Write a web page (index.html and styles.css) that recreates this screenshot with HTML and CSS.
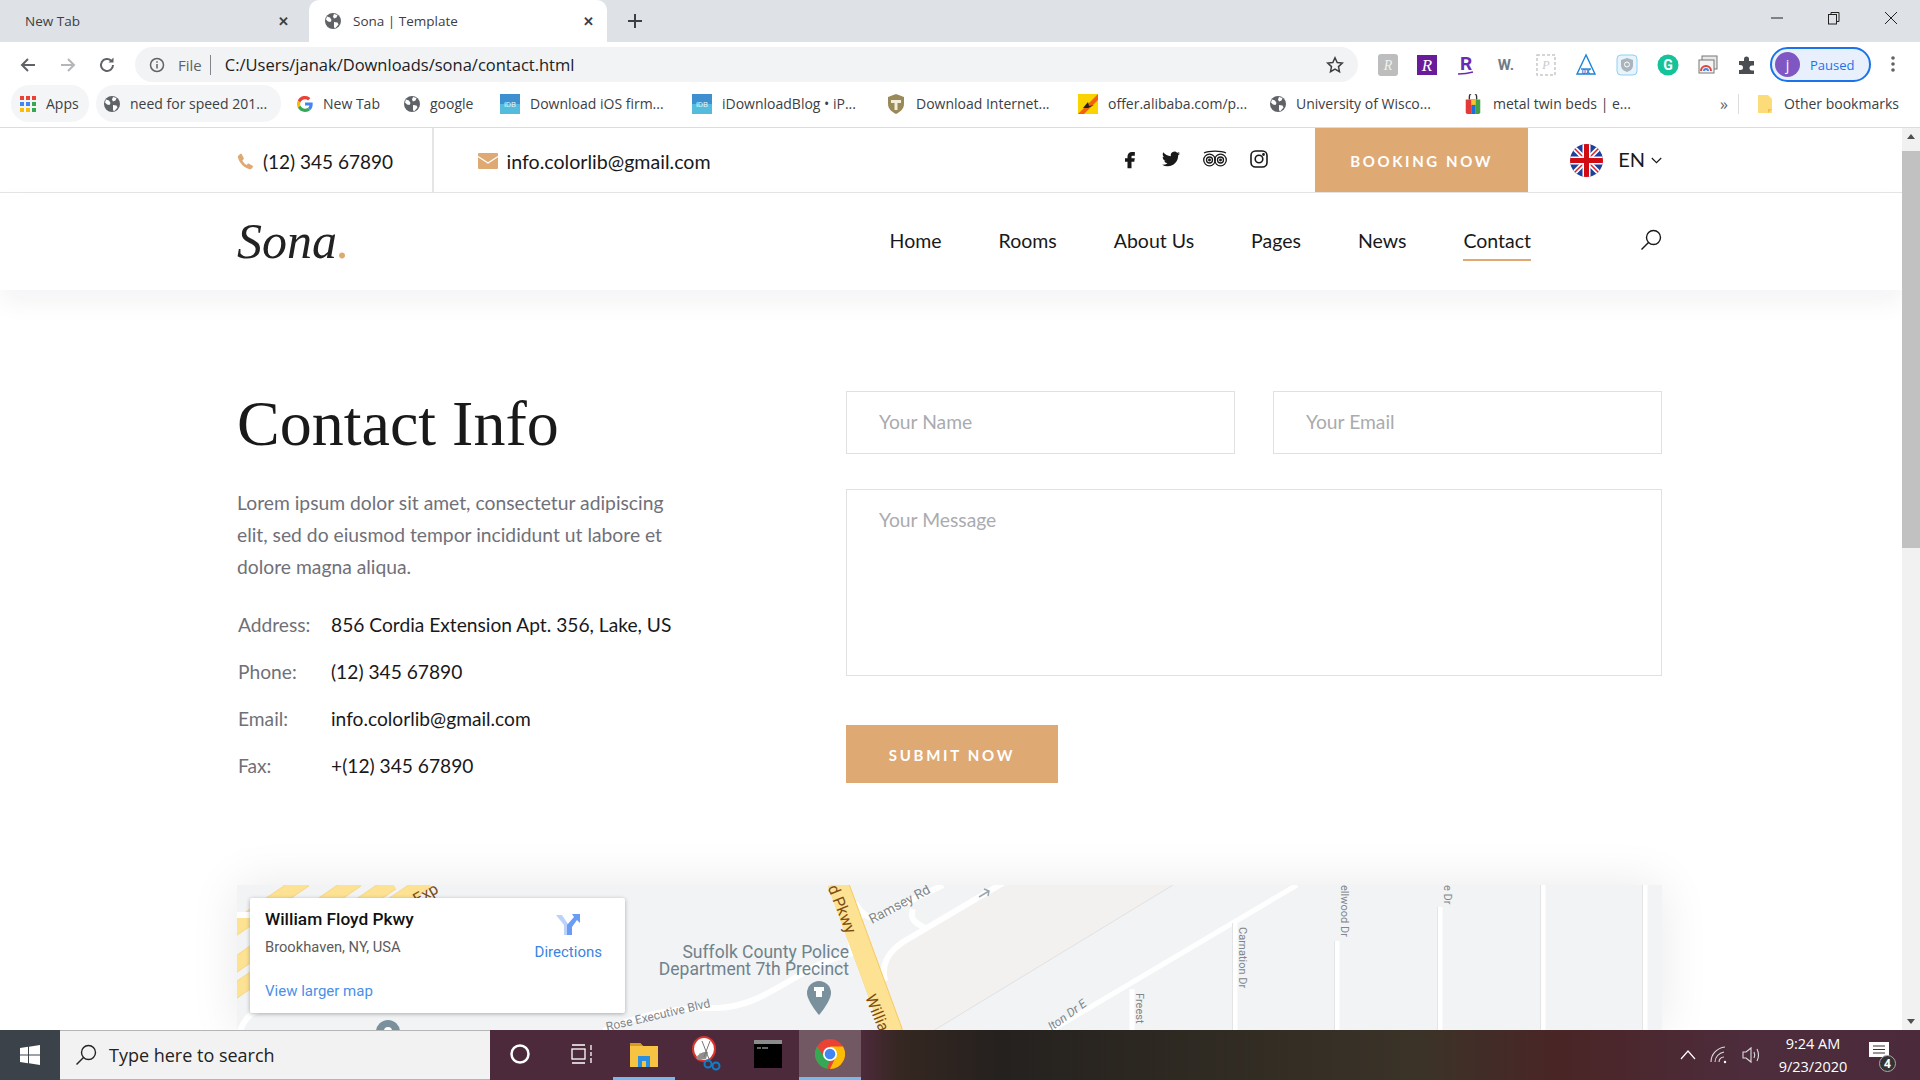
FILE: index.html
```html
<!DOCTYPE html>
<html lang="en">
<head>
  <meta charset="UTF-8">
  <title>Sona | Template</title>
  <link rel="stylesheet" href="styles.css">
</head>
<body>

<svg class="sprite" width="0" height="0">
  <symbol id="globe" viewBox="0 0 16 16">
    <circle cx="8" cy="8" r="8" fill="#5f6368"/>
    <path d="M2 3.500l3 1 1.500 2.500-1 2-2.500-.5-2-2zM9 1l3.500 1-1 2.500-2.500 1-1-2zM9 9l3.500.5 1 2-3 3.500-1.500-.5z" fill="#fff"/>
  </symbol>
  <symbol id="idb" viewBox="0 0 20 20">
    <rect width="20" height="20" fill="#3d8fd0"/>
    <rect y="10" width="20" height="10" fill="#55bbdc"/>
    <text x="10" y="13" font-size="8" fill="#dff3fb" text-anchor="middle" font-family="Roboto, sans-serif">iDB</text>
  </symbol>
</svg>

<div class="tabstrip">
  <div class="tab">
    <span class="tab-title">New Tab</span>
    <span class="tab-close">✕</span>
  </div>
  <div class="tab tab-active">
    <svg class="ico16"><use href="#globe"/></svg>
    <span class="tab-title">Sona | Template</span>
    <span class="tab-close">✕</span>
  </div>
  <svg class="tab-new" width="16" height="16" viewBox="0 0 16 16"><path d="M8 1v14M1 8h14" stroke="#3c4043" stroke-width="2"/></svg>
  <div class="win-controls">
    <svg width="14" height="14" viewBox="0 0 14 14"><path d="M1 7h12" stroke="#222" stroke-width="1"/></svg>
    <svg width="14" height="14" viewBox="0 0 14 14" fill="none" stroke="#222"><rect x="1.500" y="3.500" width="8" height="9.500"/><path d="M4 3.500V1.500h8v9h-2.500"/></svg>
    <svg width="14" height="14" viewBox="0 0 14 14"><path d="M1 1l12 12M13 1L1 13" stroke="#222" stroke-width="1"/></svg>
  </div>
</div>

<div class="toolbar">
  <div class="nav-btns">
    <svg width="18" height="18" viewBox="0 0 18 18" fill="none" stroke="#5f6368" stroke-width="2"><path d="M16 9H3M9 3L3 9l6 6"/></svg>
    <svg width="18" height="18" viewBox="0 0 18 18" fill="none" stroke="#b3b6ba" stroke-width="2"><path d="M2 9h13M9 3l6 6-6 6"/></svg>
    <svg width="18" height="18" viewBox="0 0 18 18" fill="none" stroke="#5f6368" stroke-width="2"><path d="M15 9a6 6 0 1 1-1.800-4.300"/><path d="M15.500 1.500v5h-5" fill="#5f6368" stroke="none"/></svg>
  </div>
  <div class="omnibox">
    <svg width="16" height="16" viewBox="0 0 16 16" fill="none" stroke="#5f6368" stroke-width="1.500"><circle cx="8" cy="8" r="6.500"/><path d="M8 7v4.500M8 4.200v1.500"/></svg>
    <span class="scheme">File</span>
    <span class="omni-sep"></span>
    <span class="url">C:/Users/janak/Downloads/sona/contact.html</span>
    <svg class="star" width="18" height="18" viewBox="0 0 18 18" fill="none" stroke="#3c4043" stroke-width="1.500"><path d="M9 1.800l2.200 4.700 5.100.6-3.800 3.500 1 5.100L9 13.200l-4.500 2.500 1-5.100L1.700 7.100l5.100-.6z"/></svg>
  </div>
  <div class="extensions">
    <svg width="20" height="22" viewBox="0 0 20 22"><rect width="20" height="22" rx="3" fill="#bdbdbd"/><text x="10" y="16" font-size="14" fill="#f1f1f1" text-anchor="middle" font-family="Liberation Serif, serif" font-style="italic">R</text></svg>
    <svg width="20" height="22" viewBox="0 0 20 22"><rect y="1" width="20" height="20" fill="#6a1b9a"/><text x="10" y="17" font-size="17" fill="#fff" text-anchor="middle" font-family="Liberation Serif, serif" font-style="italic">R</text></svg>
    <svg width="20" height="22" viewBox="0 0 20 22"><text x="10" y="16" font-size="19" font-weight="700" fill="#6a2bb3" text-anchor="middle" font-family="Roboto, sans-serif">R</text><path d="M2 20c6 0 10-.5 15-2" stroke="#6a2bb3" stroke-width="1.500" fill="none"/></svg>
    <svg width="22" height="22" viewBox="0 0 22 22"><text x="11" y="16" font-size="15" font-weight="700" fill="#6f7c85" text-anchor="middle" font-family="Roboto, sans-serif">W.</text></svg>
    <svg width="20" height="22" viewBox="0 0 20 22"><rect x="1" y="1" width="18" height="20" fill="none" stroke="#c8c8c8" stroke-width="1.500" stroke-dasharray="3 2"/><text x="10" y="15" font-size="12" fill="#c8c8c8" text-anchor="middle" font-family="Liberation Serif, serif" font-style="italic">P</text></svg>
    <svg width="22" height="24" viewBox="0 0 22 24" fill="none" stroke="#1a84d8" stroke-width="1.400"><path d="M11 2L2 21h18z"/><path d="M6 16h10"/><text x="11" y="21" font-size="7" fill="#1a84d8" stroke="none" text-anchor="middle" font-weight="700" font-family="Roboto, sans-serif">0X</text></svg>
    <svg width="22" height="22" viewBox="0 0 22 22"><rect x="1" y="1" width="20" height="20" rx="4" fill="#e8f3fb" stroke="#8fd0f5"/><path d="M11 4l6 2v5c0 4-3 6-6 7-3-1-6-3-6-7V6z" fill="#aab4bc"/><circle cx="11" cy="10.500" r="2.500" fill="none" stroke="#fff"/></svg>
    <svg width="22" height="22" viewBox="0 0 22 22"><circle cx="11" cy="11" r="10.500" fill="#15c39a"/><text x="11" y="16" font-size="14" font-weight="700" fill="#fff" text-anchor="middle" font-family="Roboto, sans-serif">G</text></svg>
    <svg width="20" height="22" viewBox="0 0 20 22" fill="none"><rect x="4" y="2" width="15" height="13" fill="#e8e8e8" stroke="#777"/><rect x="1" y="6" width="15" height="13" fill="#f4f4f4" stroke="#777"/><path d="M3 17a5 5 0 0 1 10 0" stroke="#db4437" stroke-width="2"/><path d="M6 17a2 2 0 0 1 4 0" stroke="#4285f4" stroke-width="2"/></svg>
    <svg width="20" height="20" viewBox="0 0 20 20"><path d="M2 6h5V4a2.500 2.500 0 0 1 5 0v2h5v4.500h-2a2.500 2.500 0 0 0 0 5h2V19H2v-4h1.500a2.500 2.500 0 0 0 0-5H2z" fill="#4a4d52"/></svg>
  </div>
  <div class="profile">
    <span class="avatar">j</span>
    <span class="paused">Paused</span>
  </div>
  <svg class="menu-dots" width="6" height="18" viewBox="0 0 6 18" fill="#5f6368"><circle cx="3" cy="3" r="1.800"/><circle cx="3" cy="9" r="1.800"/><circle cx="3" cy="15" r="1.800"/></svg>
</div>

<div class="bookmarks">
  <div class="bm bm-chip">
    <svg class="ico16" viewBox="0 0 16 16"><g fill="#ea4335"><rect width="4" height="4"/><rect x="6" width="4" height="4"/><rect x="12" width="4" height="4"/></g><g fill="#4285f4"><rect y="6" width="4" height="4"/><rect x="6" y="6" width="4" height="4"/></g><rect x="12" y="6" width="4" height="4" fill="#34a853"/><g fill="#fbbc05"><rect y="12" width="4" height="4"/><rect x="6" y="12" width="4" height="4"/></g><rect x="12" y="12" width="4" height="4" fill="#34a853"/></svg>
    Apps
  </div>
  <div class="bm bm-chip"><svg class="ico16"><use href="#globe"/></svg>need for speed 201...</div>
  <div class="bm">
    <svg class="ico16" viewBox="0 0 16 16"><path d="M15.700 8.200c0-.6 0-1.100-.1-1.600H8v3h4.400c-.2 1-.8 1.900-1.600 2.400l2.500 2c1.500-1.400 2.400-3.400 2.400-5.800z" fill="#4285f4"/><path d="M8 16c2.200 0 4-.7 5.300-2l-2.500-2c-.7.500-1.600.8-2.800.8-2.100 0-3.900-1.400-4.600-3.300L.8 11.600C2.100 14.200 4.800 16 8 16z" fill="#34a853"/><path d="M3.400 9.500a4.800 4.800 0 0 1 0-3L.8 4.400a8 8 0 0 0 0 7.200z" fill="#fbbc05"/><path d="M8 3.200c1.200 0 2.300.4 3.100 1.200l2.300-2.300A8 8 0 0 0 .8 4.400l2.600 2.100C4.100 4.600 5.900 3.200 8 3.200z" fill="#ea4335"/></svg>
    New Tab
  </div>
  <div class="bm"><svg class="ico16"><use href="#globe"/></svg>google</div>
  <div class="bm"><svg class="ico20"><use href="#idb"/></svg>Download iOS firm...</div>
  <div class="bm"><svg class="ico20"><use href="#idb"/></svg>iDownloadBlog • iP...</div>
  <div class="bm">
    <svg class="ico20" viewBox="0 0 20 20"><path d="M10 0l8 3v7c0 5-4 8-8 10-4-2-8-5-8-10V3z" fill="#9a8a5a"/><path d="M5 6h10v3h-3.500v7h-3V9H5z" fill="#f2ecd8"/></svg>
    Download Internet...
  </div>
  <div class="bm">
    <svg class="ico20" viewBox="0 0 20 20"><rect width="20" height="20" fill="#fbd400"/><path d="M0 20L20 0v6L6 20z" fill="#f0620d"/><path d="M5 14l5-6 1 4 5-1-6 3z" fill="#222"/></svg>
    offer.alibaba.com/p...
  </div>
  <div class="bm"><svg class="ico16"><use href="#globe"/></svg>University of Wisco...</div>
  <div class="bm">
    <svg class="ico20" viewBox="0 0 20 22"><path d="M6 6V3a4 4 0 0 1 8 0v3" fill="none" stroke="#333" stroke-width="1.500"/><path d="M2 6h6v16H4a2 2 0 0 1-2-2z" fill="#e53935"/><path d="M8 6h5v16H8z" fill="#1e6fd9"/><path d="M13 6h5v14a2 2 0 0 1-2 2h-3z" fill="#43a047"/><path d="M8 6h5v6H8z" fill="#fbc02d"/></svg>
    metal twin beds | e...
  </div>
  <div class="bm-more">»</div>
  <span class="bm-sep"></span>
  <div class="bm-other">
    <svg class="ico20" viewBox="0 0 20 20"><path d="M3 1h10l4 4v14H3z" fill="#fcdc78"/><path d="M13 15h4l-4 4z" fill="#efc14e"/></svg>
    Other bookmarks
  </div>
</div>

<div class="viewport">
  <div class="page">
    <header class="header">
      <div class="topbar">
        <div class="container topbar-row">
          <div class="top-contact top-phone">
            <svg width="17" height="17" viewBox="0 0 24 24" fill="#dfa974"><path d="M6.600 1.500L9.500 7c.3.600.2 1.200-.2 1.700L7.600 10.600c1.200 2.700 3 4.800 5.800 6.300l1.900-1.700c.5-.4 1.100-.5 1.700-.2l5 3c.7.400.8 1.100.4 1.700l-1.300 2c-.8 1.100-2 1.600-3.300 1.200C10 21 3.500 14 1.300 6.300.900 4.900 1.400 3.700 2.500 3l2.300-1.800c.7-.4 1.500-.3 1.800.3z"/></svg>
            (12) 345 67890
          </div>
          <div class="top-contact top-mail">
            <svg width="20" height="16" viewBox="0 0 20 16"><rect width="20" height="16" rx="1" fill="#dfa974"/><path d="M0 3.500l10 6.500 10-6.500" fill="none" stroke="#fff" stroke-width="1.200"/></svg>
            info.colorlib@gmail.com
          </div>
          <div class="top-social">
            <svg width="20" height="20" viewBox="0 0 24 24" fill="#19191a"><path d="M14.500 8h3.300V3.500h-3.500C11 3.500 9 5.700 9 8.800V11H6v4.200h3V23h4.800v-7.800h3.300l.7-4.200h-4V9c0-.6.300-1 .7-1z"/></svg>
            <svg width="18" height="18" viewBox="0 0 24 24" fill="#19191a"><path d="M23.950 4.570a10 10 0 01-2.820.77 4.960 4.960 0 002.160-2.720c-.95.55-2 .95-3.120 1.180a4.920 4.920 0 00-8.380 4.480C7.690 8.090 4.070 6.130 1.640 3.160a4.820 4.820 0 00-.67 2.480c0 1.710.87 3.210 2.190 4.100a4.900 4.900 0 01-2.230-.62v.06a4.920 4.920 0 003.950 4.830 5 5 0 01-2.210.08 4.940 4.940 0 004.600 3.420A9.870 9.870 0 010 19.540a14 14 0 007.560 2.210c9.050 0 14-7.500 14-13.980 0-.21 0-.42-.02-.63A9.940 9.940 0 0024 4.590z"/></svg>
            <svg width="26" height="18" viewBox="0 0 26 18" fill="none" stroke="#19191a" stroke-width="1.300"><path d="M2 3C7 .5 19 .5 24 3"/><circle cx="7.500" cy="10" r="5.800"/><circle cx="18.500" cy="10" r="5.800"/><circle cx="7.500" cy="10" r="3"/><circle cx="18.500" cy="10" r="3"/><circle cx="7.500" cy="10" r=".8" fill="#19191a"/><circle cx="18.500" cy="10" r=".8" fill="#19191a"/></svg>
            <svg width="18" height="18" viewBox="0 0 18 18" fill="none" stroke="#19191a" stroke-width="1.600"><rect x="1" y="1" width="16" height="16" rx="4.500"/><circle cx="9" cy="9" r="3.800"/><circle cx="13.500" cy="4.500" r=".6" fill="#19191a"/></svg>
          </div>
          <a class="btn-booking">BOOKING NOW</a>
          <div class="lang">
            <svg class="flag" width="33" height="33" viewBox="0 0 33 33">
              <defs><clipPath id="flagclip"><circle cx="16.500" cy="16.500" r="16.500"/></clipPath></defs>
              <g clip-path="url(#flagclip)">
                <rect width="33" height="33" fill="#1f3f9e"/>
                <path d="M0 0l33 33M33 0L0 33" stroke="#fff" stroke-width="5"/>
                <path d="M0 0l33 33M33 0L0 33" stroke="#d8232a" stroke-width="1.500"/>
                <path d="M16.500 0v33M0 16.500h33" stroke="#fff" stroke-width="8"/>
                <path d="M16.500 0v33M0 16.500h33" stroke="#d00c12" stroke-width="5"/>
              </g>
            </svg>
            <span class="lang-code">EN</span>
            <svg width="11" height="7" viewBox="0 0 11 7" fill="none" stroke="#19191a" stroke-width="1.200"><path d="M.8 1l4.700 4.700L10.200 1"/></svg>
          </div>
        </div>
      </div>
      <div class="menubar">
        <div class="container menu-row">
          <div class="logo">Sona<span class="logo-dot">.</span></div>
          <nav class="menu">
            <a>Home</a>
            <a>Rooms</a>
            <a>About Us</a>
            <a>Pages</a>
            <a>News</a>
            <a class="active">Contact</a>
          </nav>
          <svg class="search-ico" width="22" height="22" viewBox="0 0 22 22" fill="none" stroke="#19191a" stroke-width="1.400"><circle cx="13.500" cy="8.500" r="7"/><path d="M8.500 13.500L1.500 20.500"/></svg>
        </div>
      </div>
    </header>

    <section class="container contact">
      <div class="contact-info">
        <h2>Contact Info</h2>
        <p>Lorem ipsum dolor sit amet, consectetur adipiscing<br>elit, sed do eiusmod tempor incididunt ut labore et<br>dolore magna aliqua.</p>
        <table class="info-table">
          <tr><td class="info-key">Address:</td><td>856 Cordia Extension Apt. 356, Lake, US</td></tr>
          <tr><td class="info-key">Phone:</td><td>(12) 345 67890</td></tr>
          <tr><td class="info-key">Email:</td><td>info.colorlib@gmail.com</td></tr>
          <tr><td class="info-key">Fax:</td><td>+(12) 345 67890</td></tr>
        </table>
      </div>
      <form class="contact-form">
        <input type="text" placeholder="Your Name">
        <input type="text" placeholder="Your Email">
        <textarea placeholder="Your Message"></textarea>
        <button type="button">SUBMIT NOW</button>
      </form>
    </section>

    <section class="container map">
      <svg class="map-canvas" width="1425" height="146" viewBox="0 0 1425 146">
        <rect width="1425" height="146" fill="#f1f3f4"/>
        <path d="M766 0H936L696 146H655L648 96C644 80 650 68 666 57z" fill="#f2f1ef"/>
        <path d="M936 0L696 146" stroke="#dfe1e3" stroke-width="1" fill="none"/>
        <g stroke="#f8d98a" stroke-width="15" fill="none">
          <path d="M-5 45L68 -5M-5 82L120 -5M-5 108L155 -2M140 30L190 -4"/>
        </g>
        <g stroke="#fde293" stroke-width="13" fill="none">
          <path d="M-5 45L68 -5M-5 82L120 -5M-5 108L155 -2M140 30L190 -4"/>
        </g>
        <g stroke="#fff" stroke-width="6" fill="none">
          <path d="M0 30h14"/>
          <path d="M3 146C8 132 16 126 30 122"/>
          <path d="M648 96C644 80 650 68 666 57L766 -2"/>
          <path d="M618 18C625 30 632 34 640 32L706 0"/>
          <path d="M676 24c-4 10 2 14 14 20"/>
          <path d="M367 146C400 130 440 122 478 123C530 123 560 80 616 68"/>
          <path d="M625 30C612 40 612 55 616 68"/>
          <path d="M1060 0L813 146" stroke-width="5"/>
          <path d="M998 38v108M895 104v42M1100 56v90M1203 22v124M1306 0v146M1408 0v146" stroke-width="5"/>
        </g>
        <g stroke="#e2e4e6" stroke-width="1" fill="none">
          <path d="M995.500 38v108M1097.500 56v90M1200.500 22v124M1303.500 0v146M1405.500 0v146"/>
        </g>
        <path d="M601 -2L656 148" stroke="#f5cb60" stroke-width="21" fill="none"/>
        <path d="M600.500 -2L655.500 148" stroke="#fde293" stroke-width="20" fill="none"/>
        <path d="M742 12l10-6M747 4l5 2-1 5" stroke="#9aa5ad" stroke-width="1.500" fill="none"/>
        <g font-family="Roboto, sans-serif">
          <text x="612" y="73" font-size="17.500" fill="#70828c" text-anchor="end">Suffolk County Police</text>
          <text x="612" y="90" font-size="17.500" fill="#70828c" text-anchor="end">Department 7th Precinct</text>
          <text transform="translate(600 26) rotate(68)" font-size="16" fill="#7b4b12" text-anchor="middle">d Pkwy</text>
          <text transform="translate(628 112) rotate(68)" font-size="16" fill="#7b4b12">Willia</text>
          <text transform="translate(635 39) rotate(-28)" font-size="13.500" fill="#80868b">Ramsey Rd</text>
          <text transform="translate(370 146) rotate(-13)" font-size="12" fill="#80868b">Rose Executive Blvd</text>
          <text transform="translate(1002 42) rotate(90)" font-size="11" fill="#80868b">Carnation Dr</text>
          <text transform="translate(1104 0) rotate(90)" font-size="11" fill="#80868b">ellwood Dr</text>
          <text transform="translate(1207 0) rotate(90)" font-size="11" fill="#80868b">e Dr</text>
          <text transform="translate(899 108) rotate(90)" font-size="11" fill="#80868b">Freest</text>
          <text transform="translate(815 146) rotate(-36)" font-size="12" fill="#80868b" font-style="italic">lton Dr E</text>
          <text transform="translate(180 20) rotate(-30)" font-size="16" fill="#7b4b12">Exp</text>
        </g>
        <path d="M582 96a12 12 0 0 1 12 12c0 8-12 22-12 22s-12-14-12-22a12 12 0 0 1 12-12z" fill="#7b909d"/>
        <path d="M577 102h10v4h-2v6h-6v-6h-2z" fill="#fff"/>
        <circle cx="151" cy="147" r="12" fill="#7b909d"/>
        <circle cx="151" cy="146" r="4" fill="#fff"/>
      </svg>
      <div class="map-card">
        <div class="map-card-text">
          <div class="place-name">William Floyd Pkwy</div>
          <div class="place-addr">Brookhaven, NY, USA</div>
          <a class="place-link">View larger map</a>
        </div>
        <div class="directions">
          <svg width="26" height="26" viewBox="0 0 26 26"><path d="M1 4h6l6 9v11H9V14z" fill="#bcd2fb"/><path d="M17 3h8v9l-3-3-5 7v8h-5V14l7-8z" fill="#6a9cf5"/></svg>
          Directions
        </div>
      </div>
    </section>
  </div>
  <div class="scrollbar">
    <span class="sb-up"></span>
    <span class="sb-thumb"></span>
    <span class="sb-down"></span>
  </div>
</div>

<div class="taskbar">
  <div class="start">
    <svg width="20" height="20" viewBox="0 0 20 20" fill="#fff"><path d="M0 3l8-1.200v7.700H0zM9 1.700L20 0v9.500H9zM0 10.500h8v7.700L0 17zM9 10.500h11V20L9 18.300z"/></svg>
  </div>
  <div class="task-search">
    <svg width="22" height="22" viewBox="0 0 22 22" fill="none" stroke="#222" stroke-width="1.400"><circle cx="13.500" cy="8.500" r="7"/><path d="M8.500 13.500L1.500 20.500"/></svg>
    <span>Type here to search</span>
  </div>
  <div class="task-apps">
    <div class="task-app">
      <svg width="22" height="22" viewBox="0 0 22 22" fill="none" stroke="#fff" stroke-width="2.500"><circle cx="11" cy="11" r="8.500"/></svg>
    </div>
    <div class="task-app">
      <svg width="22" height="20" viewBox="0 0 22 20" fill="none" stroke="#fff" stroke-width="1.300"><path d="M1 1h13M1 19h13M20 1v5M20 14v5M20 8v4"/><rect x="1" y="5" width="13" height="10"/></svg>
    </div>
    <div class="task-app task-open">
      <svg width="28" height="26" viewBox="0 0 28 26"><path d="M0 2h10l3 3h15v21H0z" fill="#f6c342"/><path d="M0 2h10l3 3H0z" fill="#d79b1f"/><path d="M8 15h12v11h-4v-6h-4v6H8z" fill="#2b8fe0"/></svg>
    </div>
    <div class="task-app">
      <svg width="30" height="36" viewBox="0 0 30 36" fill="none"><ellipse cx="13" cy="13" rx="11" ry="12" fill="#fff" stroke="#d9342b" stroke-width="2"/><path d="M5 22c3-5 8-7 12-6l-2 7-8 1z" fill="#8f8f8f"/><path d="M11 5l7 18M19 5l-6 16" stroke="#777"/><circle cx="17" cy="28" r="3.500" stroke="#0f7ec9" stroke-width="2"/><circle cx="25" cy="30" r="3.500" stroke="#0f7ec9" stroke-width="2"/></svg>
    </div>
    <div class="task-app">
      <svg width="28" height="28" viewBox="0 0 28 28"><rect width="28" height="28" fill="#000"/><rect width="28" height="4" fill="#8c8c8c"/><path d="M3 8h4M8 8h6" stroke="#ccc"/></svg>
    </div>
    <div class="task-app task-open task-active">
      <svg width="30" height="30" viewBox="0 0 30 30">
        <circle cx="15" cy="15" r="15" fill="#ea4335"/>
        <path d="M15 30A15 15 0 0 1 2 7.500L9.500 18l6 .4L12 30z" fill="#34a853"/>
        <path d="M15 30a15 15 0 0 0 13-22.500H15l6 10z" fill="#fbbc05"/>
        <circle cx="15" cy="15" r="7" fill="#fff"/>
        <circle cx="15" cy="15" r="5.300" fill="#4285f4"/>
      </svg>
    </div>
  </div>
  <div class="tray">
    <svg width="16" height="10" viewBox="0 0 16 10" fill="none" stroke="#fff" stroke-width="1.200"><path d="M1 9l7-8 7 8"/></svg>
    <svg width="18" height="18" viewBox="0 0 18 18" fill="none" stroke="#ddd" stroke-width="1.100"><path d="M1 16C1 8 7 2 15 1M5 16c0-5 4-9 9-10M9 16c0-3 2-5 5-5"/><circle cx="15" cy="16" r="1.200" fill="#fff" stroke="none"/></svg>
    <svg width="20" height="18" viewBox="0 0 20 18" fill="none" stroke="#ddd" stroke-width="1.100"><path d="M1 6h3l5-4v14l-5-4H1zM12 6c1 2 1 4 0 6M15 3c2 4 2 8 0 12"/></svg>
    <div class="clock"><span>9:24 AM</span><span>9/23/2020</span></div>
    <div class="notify">
      <svg width="22" height="20" viewBox="0 0 22 20"><path d="M1 0h20v15H1z" fill="#fff"/><path d="M5 4h12M5 7.500h12M5 11h12" stroke="#333"/></svg>
      <span class="notify-badge">4</span>
    </div>
  </div>
</div>

</body>
</html>
```

FILE: styles.css
```css
* {
  box-sizing: border-box;
}
html, body {
  margin: 0;
  height: 1080px;
  overflow: hidden;
}
body {
  display: flex;
  flex-direction: column;
  background: #fff;
  color: #19191a;
  font-family: Lato, sans-serif;
}
.sprite {
  position: absolute;
}
.ico16 {
  width: 16px;
  height: 16px;
  flex: none;
}
.ico20 {
  width: 20px;
  height: 20px;
  flex: none;
}

/* browser chrome */
.tabstrip {
  height: 42px;
  flex: none;
  display: flex;
  align-items: center;
  background: #dee1e6;
  font-family: "Open Sans", sans-serif;
  font-size: 13.500px;
  color: #3c4043;
}
.tab {
  width: 302px;
  height: 42px;
  padding: 0 13px 0 25px;
  display: flex;
  align-items: center;
  gap: 12px;
}
.tab-active {
  width: 298px;
  padding: 0 13px 0 16px;
  background: #fff;
  border-radius: 10px 10px 0 0;
  margin-left: 7px;
}
.tab-title {
  flex: 1;
}
.tab-close {
  font-size: 13px;
  font-weight: 700;
  color: #3c4043;
}
.tab-new {
  margin-left: 20px;
}
.win-controls {
  margin-left: auto;
  width: 170px;
  padding: 0 22px 0 20px;
  margin-top: -6px;
  display: flex;
  justify-content: space-between;
}
.toolbar {
  height: 40px;
  flex: none;
  display: flex;
  align-items: flex-end;
  background: #fff;
}
.nav-btns {
  width: 135px;
  height: 35px;
  padding: 0 19px;
  display: flex;
  align-items: center;
  justify-content: space-between;
}
.omnibox {
  width: 1223px;
  height: 35px;
  padding: 0 14px;
  display: flex;
  align-items: center;
  background: #f1f3f4;
  border-radius: 18px;
  font-family: "Open Sans", sans-serif;
  font-size: 15px;
}
.scheme {
  margin-left: 13px;
  color: #5f6368;
}
.omni-sep {
  width: 1px;
  height: 20px;
  margin: 0 14px 0 8px;
  background: #80868b;
}
.url {
  color: #202124;
  font-size: 16.500px;
  flex: 1;
}
.extensions {
  width: 392px;
  height: 35px;
  margin-left: 20px;
  display: flex;
  align-items: center;
  gap: 19px;
  flex: none;
}
.profile {
  width: 101px;
  height: 35px;
  flex: none;
  display: flex;
  align-items: center;
  gap: 10px;
  padding-left: 3px;
  border: 2px solid #1a73e8;
  border-radius: 18px;
  background: #e8f0fe;
  font-family: "Open Sans", sans-serif;
  font-size: 13px;
  color: #1a73e8;
}
.avatar {
  width: 25px;
  height: 25px;
  border-radius: 50%;
  background: #7e57c2;
  color: #fff;
  font-size: 14px;
  display: flex;
  align-items: center;
  justify-content: center;
}
.menu-dots {
  margin: 0 0 9px 19px;
  flex: none;
}
.bookmarks {
  height: 46px;
  flex: none;
  padding: 3px 0 5px 11px;
  display: flex;
  align-items: stretch;
  background: #fff;
  border-bottom: 1px solid #dadce0;
  font-family: "Open Sans", sans-serif;
  font-size: 14px;
  color: #3c4043;
}
.bm {
  display: flex;
  align-items: center;
  gap: 10px;
  white-space: nowrap;
  flex: none;
  padding-left: 9px;
}
.bm-chip {
  background: #f4f5f6;
  border-radius: 18px;
}
.bm:nth-child(1) { width: 78px; }
.bm:nth-child(2) { width: 185px; margin: 0 7px 0 7px; padding-left: 8px; }
.bm:nth-child(3) { width: 107px; }
.bm:nth-child(4) { width: 96px; }
.bm:nth-child(5) { width: 192px; }
.bm:nth-child(6) { width: 194px; }
.bm:nth-child(7) { width: 192px; }
.bm:nth-child(8) { width: 192px; }
.bm:nth-child(9) { width: 193px; }
.bm:nth-child(10) { width: 266px; }
.bm-more {
  align-self: center;
  color: #5f6368;
  font-size: 16px;
  width: 18px;
}
.bm-sep {
  width: 1px;
  height: 20px;
  align-self: center;
  margin: 0 16px 0 0;
  background: #dadce0;
}
.bm-other {
  display: flex;
  align-items: center;
  gap: 9px;
  white-space: nowrap;
}

/* page */
.viewport {
  flex: 1;
  min-height: 0;
  display: flex;
  overflow: hidden;
}
.page {
  flex: 1;
  min-width: 0;
  overflow: hidden;
  background: #fff;
}
.scrollbar {
  width: 18px;
  flex: none;
  display: flex;
  flex-direction: column;
  align-items: center;
  background: #f1f1f1;
}
.sb-up, .sb-down {
  width: 0;
  height: 0;
  margin: 6px 0;
  border-left: 4px solid transparent;
  border-right: 4px solid transparent;
}
.sb-up {
  border-bottom: 5px solid #505050;
}
.sb-down {
  margin-top: auto;
  border-top: 5px solid #505050;
}
.sb-thumb {
  width: 100%;
  height: 397px;
  margin-top: 6px;
  background: #c1c1c1;
}
.container {
  width: 1425px;
  margin-left: 237px;
}
.topbar {
  height: 65px;
  border-bottom: 1px solid #e5e5e5;
}
.topbar-row {
  height: 64px;
  display: flex;
  align-items: stretch;
}
.top-contact {
  display: flex;
  align-items: center;
  gap: 9px;
  padding-top: 2px;
  white-space: nowrap;
}
.top-phone {
  width: 197px;
  border-right: 2px solid #e5e5e5;
  font-size: 19px;
}
.top-mail {
  width: 686px;
  padding-left: 44px;
  font-size: 19.600px;
}
.top-social {
  width: 195px;
  margin-left: 2px;
  display: flex;
  align-items: center;
  gap: 22px;
  padding-bottom: 2px;
  flex: none;
}
.btn-booking {
  width: 213px;
  flex: none;
  display: flex;
  align-items: center;
  justify-content: center;
  padding-top: 1px;
  background: #dfa974;
  color: #fff;
  font-size: 15px;
  font-weight: 700;
  letter-spacing: 2.600px;
}
.lang {
  margin-left: 42px;
  display: flex;
  align-items: center;
  gap: 10px;
  flex: none;
}
.lang-code {
  margin: 0 -4px 0 5px;
  font-size: 20px;
  padding-bottom: 3px;
}
.menubar {
  height: 97px;
  box-shadow: 0 12px 24px rgba(36, 11, 54, .05);
}
.menu-row {
  height: 97px;
  display: flex;
  align-items: center;
}
.logo {
  font-family: "Liberation Serif", serif;
  font-style: italic;
  font-size: 50px;
  color: #222;
  line-height: 1;
  padding-bottom: 1px;
}
.logo-dot {
  color: #dfa974;
}
.menu {
  margin: 2px 0 0 auto;
  display: flex;
  gap: 57px;
  font-size: 19.500px;
}
.menu a {
  padding: 5px 0 7px;
  border-bottom: 2px solid transparent;
  color: #19191a;
}
.menu a.active {
  border-bottom-color: #dfa974;
}
.search-ico {
  margin: 0 0 4px 109px;
  flex: none;
}
.contact {
  display: grid;
  grid-template-columns: 609px 1fr;
  padding-top: 101px;
}
.contact-info h2 {
  margin: 0;
  font-family: "Liberation Serif", serif;
  font-weight: 400;
  font-size: 64px;
  line-height: 66px;
}
.contact-info p {
  margin: 30px 0 0;
  font-size: 19.300px;
  line-height: 32px;
  color: #707079;
}
.info-table {
  margin-top: 18px;
  border-collapse: collapse;
  font-size: 19.200px;
}
.info-table td {
  height: 47px;
  padding: 0;
}
.info-key {
  width: 94px;
  padding-left: 1px !important;
  color: #707079;
}
.contact-form {
  display: grid;
  grid-template-columns: 1fr 1fr;
  gap: 35px 38px;
  align-content: start;
}
.contact-form input, .contact-form textarea {
  width: 100%;
  padding: 0 32px;
  border: 1px solid #e1e1e1;
  border-radius: 0;
  font-family: Lato, sans-serif;
  font-size: 19.300px;
  color: #19191a;
  outline: none;
}
.contact-form input {
  height: 63px;
  padding-bottom: 3px;
}
.contact-form textarea {
  grid-column: 1 / 3;
  height: 187px;
  padding-top: 18px;
  resize: none;
}
.contact-form ::placeholder {
  color: #aaabae;
}
.contact-form button {
  grid-column: 1 / 2;
  width: 212px;
  height: 58px;
  margin-top: 14px;
  padding-top: 3px;
  background: #dfa974;
  border: none;
  color: #fff;
  font-family: Lato, sans-serif;
  font-size: 15px;
  font-weight: 700;
  letter-spacing: 2.700px;
}
.map {
  position: relative;
  height: 146px;
  margin-top: 96px;
  box-shadow: 0 0 50px rgba(0, 0, 0, .09);
}
.map-canvas {
  display: block;
}
.map-card {
  position: absolute;
  left: 13px;
  top: 13px;
  width: 375px;
  height: 115px;
  padding: 11px 23px 0 15px;
  display: flex;
  justify-content: space-between;
  background: #fff;
  border-radius: 2px;
  box-shadow: 0 1px 4px rgba(0, 0, 0, .3);
  font-family: Roboto, sans-serif;
}
.place-name {
  font-size: 17.300px;
  font-weight: 500;
  color: #111;
}
.place-addr {
  margin-top: 9px;
  font-size: 14.700px;
  color: #5b5b5b;
}
.place-link {
  display: block;
  margin-top: 26px;
  font-size: 15px;
  color: #4a90e8;
}
.directions {
  display: flex;
  flex-direction: column;
  align-items: center;
  gap: 6px;
  margin-top: 2px;
  font-size: 15px;
  color: #3a84df;
}

/* windows taskbar */
.taskbar {
  height: 50px;
  flex: none;
  display: flex;
  background: linear-gradient(90deg, #4d2a3b 0, #4d2a3b 860px, #352721 900px, #25211f 1000px, #2f2a22 1200px, #3b3328 1420px, #4a2526 1560px, #4d2c3c 1750px, #4b2a3b 100%);
  color: #fff;
}
.start {
  width: 60px;
  display: flex;
  align-items: center;
  justify-content: center;
  background: #3c424a;
}
.task-search {
  width: 430px;
  padding-left: 15px;
  display: flex;
  align-items: center;
  gap: 12px;
  background: #f2f2f2;
  border-top: 1px solid #b5b5b5;
  border-bottom: 1px solid #b5b5b5;
  font-family: "Open Sans", sans-serif;
  font-size: 18px;
  color: #222;
}
.task-apps {
  display: flex;
  margin-left: -1px;
}
.task-app {
  width: 62px;
  display: flex;
  align-items: center;
  justify-content: center;
  border-bottom: 3px solid transparent;
}
.task-open {
  border-bottom-color: #76b9ed;
}
.task-active {
  background: #725862;
}
.tray {
  margin-left: auto;
  display: flex;
  align-items: center;
  gap: 14px;
  padding-right: 26px;
}
.clock {
  width: 90px;
  margin: -1px 0 0 -8px;
  display: flex;
  flex-direction: column;
  align-items: center;
  gap: 6px;
  font-family: "Open Sans", sans-serif;
  font-size: 14.500px;
  line-height: 17px;
}
.notify {
  position: relative;
  width: 26px;
  height: 26px;
  margin-left: -4px;
}
.notify-badge {
  position: absolute;
  right: -2px;
  bottom: -4px;
  width: 17px;
  height: 17px;
  border-radius: 50%;
  border: 1px solid #aaa;
  background: #333;
  font-size: 12px;
  font-weight: 700;
  text-align: center;
  line-height: 15px;
  font-family: "Open Sans", sans-serif;
}
```
